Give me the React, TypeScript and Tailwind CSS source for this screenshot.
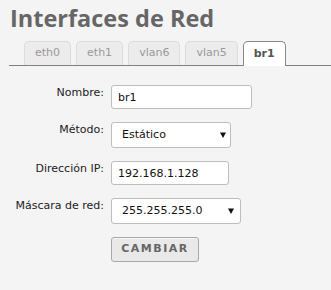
import { useState } from 'react'

const tabs = ['eth0', 'eth1', 'vlan6', 'vlan5', 'br1']

function Arrow({ right }: { right: string }) {
  return (
    <svg className={`pointer-events-none absolute top-1/2 -translate-y-1/2 ${right}`} width="6" height="6" viewBox="0 0 6 6">
      <path d="M0 0.5 H6 L3 6 Z" fill="#111" />
    </svg>
  )
}

export default function App() {
  const [active, setActive] = useState('br1')

  return (
    <div className="w-[331px] h-[290px] bg-[#f4f4f4] pt-[5px] font-['DejaVu_Sans',sans-serif] text-[11px] text-[#222]">
      <h1 className="pl-[10px] text-[23.5px] leading-[26px] font-bold font-['Open_Sans',sans-serif] text-[#666]">
        Interfaces de Red
      </h1>

      <div className="mt-[10px] ml-[9px] flex gap-[5px] pl-[15px] border-b border-[#808080] h-[25px]">
        {tabs.map((t) => {
          const on = t === active
          return (
            <button
              key={t}
              onClick={() => setActive(t)}
              className={
                on
                  ? 'h-[25px] px-[10px] rounded-t-[5px] border border-b-0 border-[#888] bg-white font-bold text-[#555] text-[11px]'
                  : 'h-[24px] px-[10px] rounded-t-[5px] border border-b-0 border-[#dcdcdc] bg-[#ececec] text-[#9a9a9a] text-[11px]'
              }
            >
              {t}
            </button>
          )
        })}
      </div>

      <form className="mt-[19px] grid grid-cols-[104px_auto] gap-x-[7px] gap-y-[13px] items-start">
        <label className="text-right leading-[13px] pt-[1px]">Nombre:</label>
        <input
          defaultValue="br1"
          className="w-[141px] h-[24px] px-[6px] bg-white border border-[#bdbdbd] rounded-[3px] text-[11px] text-[#111] outline-none"
        />

        <label className="text-right leading-[13px] pt-[1px]">Método:</label>
        <div className="relative w-[120px] h-[26px]">
          <select className="appearance-none w-full h-full pl-[10px] bg-white border border-[#bdbdbd] rounded-[3px] text-[11px] text-[#111] outline-none">
            <option>Estático</option>
            <option>DHCP</option>
          </select>
          <Arrow right="right-[5px]" />
        </div>

        <label className="text-right leading-[13px] pt-[1px]">Dirección IP:</label>
        <input
          defaultValue="192.168.1.128"
          className="w-[118px] h-[24px] px-[6px] bg-white border border-[#bdbdbd] rounded-[3px] text-[11px] text-[#111] outline-none"
        />

        <label className="text-right leading-[13px] pt-[1px]">Máscara de red:</label>
        <div className="relative w-[130px] h-[26px]">
          <select className="appearance-none w-full h-full pl-[10px] bg-white border border-[#bdbdbd] rounded-[3px] text-[11px] text-[#111] outline-none">
            <option>255.255.255.0</option>
            <option>255.255.0.0</option>
          </select>
          <Arrow right="right-[7px]" />
        </div>

        <div />
        <button
          type="button"
          className="w-[88px] h-[25px] bg-[#e9e9e9] border border-[#a8a8a8] rounded-[3px] shadow-[inset_0_1px_0_#f7f7f7] text-[11px] font-bold tracking-[1.5px] text-[#666]"
        >
          CAMBIAR
        </button>
      </form>
    </div>
  )
}
